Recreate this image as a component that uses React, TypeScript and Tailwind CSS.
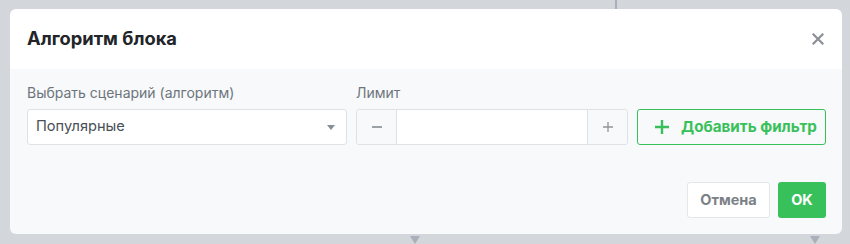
import React from "react";

export default function App() {
  return (
    <div
      className="relative w-[850px] h-[244px] bg-[#d3d7dc] overflow-hidden pt-[9px] pl-[10px]"
      style={{ fontFamily: "Inter, 'Noto Sans', sans-serif" }}
    >
      {/* canvas connectors behind the modal */}
      <div className="absolute left-[615px] top-0 w-[2px] h-[10px] bg-[#a9b0b9]" />
      <div className="absolute left-[410px] top-[236px] w-0 h-0 border-l-[5px] border-r-[5px] border-t-[8px] border-l-transparent border-r-transparent border-t-[#a9b0b9]" />
      <div className="absolute left-[810px] top-[236px] w-0 h-0 border-l-[5px] border-r-[5px] border-t-[8px] border-l-transparent border-r-transparent border-t-[#a9b0b9]" />

      <div className="relative w-[832px] h-[225px] rounded-[6px] overflow-hidden flex flex-col">
        <div className="h-[60px] bg-white flex items-center justify-between pl-[17px] pr-[17px]">
          <div className="text-[18.3px] font-bold text-[#212529]">Алгоритм блока</div>
          <svg width="12" height="12" viewBox="0 0 12 12" className="mr-[1px]">
            <path d="M1.5 1.5 L10.5 10.5 M10.5 1.5 L1.5 10.5" stroke="#8a8f95" strokeWidth="2.2" strokeLinecap="square" />
          </svg>
        </div>
        <div className="flex-1 bg-[#f8f9fa] pl-[17px] pr-[16px] pt-[15px] flex flex-col">
          <div className="flex items-end gap-[9px]">
            <div className="w-[320px] flex flex-col">
              <div className="text-[14px] leading-[18px] text-[#6c757d] mb-[7px]">Выбрать сценарий (алгоритм)</div>
              <div className="h-[36px] bg-white border border-[#dee2e6] rounded-[3px] flex items-center justify-between pl-[8px] pr-[11px]">
                <span className="text-[14.6px] text-[#495057]">Популярные</span>
                <svg width="8" height="5" viewBox="0 0 8 5">
                  <path d="M0 0 L8 0 L4 5 Z" fill="#868e96" />
                </svg>
              </div>
            </div>
            <div className="w-[272px] flex flex-col">
              <div className="text-[14px] leading-[18px] text-[#6c757d] mb-[7px]">Лимит</div>
              <div className="h-[36px] flex border border-[#dee2e6] rounded-[3px] overflow-hidden">
                <div className="w-[40px] bg-[#f8f9fa] flex items-center justify-center border-r border-[#dee2e6]">
                  <div className="w-[10px] h-[1.5px] bg-[#9aa0a6]" />
                </div>
                <div className="flex-1 bg-white" />
                <div className="w-[40px] bg-[#f8f9fa] flex items-center justify-center border-l border-[#dee2e6]">
                  <svg width="10" height="10" viewBox="0 0 10 10">
                    <path d="M5 0 V10 M0 5 H10" stroke="#8e959c" strokeWidth="1.3" />
                  </svg>
                </div>
              </div>
            </div>
            <div className="w-[189px] h-[36px] border border-[#38c15b] rounded-[3px] flex items-center pl-[17px] gap-[12px]">
              <svg width="14" height="14" viewBox="0 0 14 14">
                <path d="M7 0 V14 M0 7 H14" stroke="#38c15b" strokeWidth="2.4" />
              </svg>
              <span className="text-[15.2px] font-bold text-[#38c15b]">Добавить фильтр</span>
            </div>
          </div>
          <div className="flex justify-end gap-[8px] mt-[37px]">
            <div className="h-[36px] w-[83px] bg-white border border-[#e3e6ea] rounded-[3px] flex items-center justify-center text-[14.5px] font-bold text-[#7b8187]">
              Отмена
            </div>
            <div className="h-[36px] w-[48px] bg-[#38c15b] rounded-[3px] flex items-center justify-center text-[14.5px] font-bold text-white">
              OK
            </div>
          </div>
        </div>
      </div>
    </div>
  );
}
